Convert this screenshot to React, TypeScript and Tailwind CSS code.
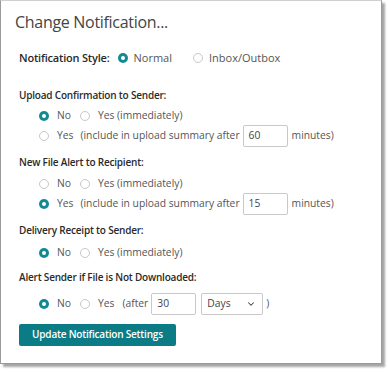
import { ChevronDown } from "lucide-react";

const Radio = ({ checked }: { checked?: boolean }) =>
  checked ? (
    <span className="inline-flex h-[10px] w-[10px] shrink-0 items-center justify-center rounded-full bg-[#138a93]">
      <span className="h-[4px] w-[4px] rounded-full bg-white" />
    </span>
  ) : (
    <span className="inline-block h-[10px] w-[10px] shrink-0 rounded-full border border-[#c8c8c8] bg-white" />
  );

const Option = ({ checked, label, gap = "gap-[8px]" }: { checked?: boolean; label: string; gap?: string }) => (
  <span className={`flex items-center ${gap}`}>
    <Radio checked={checked} />
    <span>{label}</span>
  </span>
);

const NumBox = ({ value }: { value: string }) => (
  <span className="flex h-[22px] w-[45px] items-center rounded-[2px] border border-[#c9c9c9] px-[5px] text-[#444]">
    {value}
  </span>
);

const Heading = ({ children, className = "" }: { children: string; className?: string }) => (
  <div className={`text-[10px] font-semibold tracking-[-0.2px] text-[#2a2a2a] ${className}`}>{children}</div>
);

export default function App() {
  return (
    <div className="h-[372px] w-[388px] bg-white font-['Open_Sans',sans-serif] text-[10.3px]">
      <div className="h-[364px] w-[382px] border border-[#9a9a9a] border-t-[#cfcfcf] bg-white px-[18px] shadow-[3px_3px_2px_rgba(0,0,0,0.35)]">
        <h1 className="-ml-[4px] mt-[9px] text-[16px] tracking-[-0.3px] text-[#444]">Change Notification...</h1>

        {/* notification style */}
        <div className="mt-[16px] flex items-center text-[11px] text-[#555]">
          <span className="font-semibold tracking-[-0.2px] text-[#2a2a2a]">Notification Style:</span>
          <span className="ml-[8px]"><Option checked label="Normal" gap="gap-[6px]" /></span>
          <span className="ml-[21px]"><Option label="Inbox/Outbox" gap="gap-[6px]" /></span>
        </div>

        <Heading className="mt-[21px]">Upload Confirmation to Sender:</Heading>
        <div className="ml-[20px] mt-[6px] flex flex-col gap-[1px] text-[#555]">
          <div className="flex h-[15px] items-center gap-[9px]">
            <Option checked label="No" />
            <Option label="Yes (immediately)" />
          </div>
          <div className="flex items-center">
            <Option label="Yes" />
            <span className="ml-[7px]">(include in upload summary after</span>
            <span className="ml-[3px]"><NumBox value="60" /></span>
            <span className="ml-[4px]">minutes)</span>
          </div>
        </div>

        <Heading className="mt-[8px]">New File Alert to Recipient:</Heading>
        <div className="ml-[20px] mt-[7px] flex flex-col gap-[1px] text-[#555]">
          <div className="flex h-[15px] items-center gap-[9px]">
            <Option label="No" />
            <Option label="Yes (immediately)" />
          </div>
          <div className="flex items-center">
            <Option checked label="Yes" />
            <span className="ml-[7px]">(include in upload summary after</span>
            <span className="ml-[3px]"><NumBox value="15" /></span>
            <span className="ml-[4px]">minutes)</span>
          </div>
        </div>

        <Heading className="mt-[8px]">Delivery Receipt to Sender:</Heading>
        <div className="ml-[20px] mt-[8px] flex h-[15px] items-center gap-[9px] text-[#555]">
          <Option checked label="No" />
          <Option label="Yes (immediately)" />
        </div>

        <Heading className="mt-[9px]">Alert Sender if File is Not Downloaded:</Heading>
        <div className="ml-[20px] mt-[8px] flex items-center text-[#555]">
          <Option checked label="No" />
          <span className="ml-[9px]"><Option label="Yes" /></span>
          <span className="ml-[8px]">(after</span>
          <span className="ml-[3px]"><NumBox value="30" /></span>
          <span className="ml-[5px] flex h-[22px] w-[62px] items-center justify-between rounded-[2px] border border-[#c9c9c9] pl-[5px] pr-[6px] text-[#444]">
            Days
            <ChevronDown className="h-[10px] w-[10px]" strokeWidth={2.5} />
          </span>
          <span className="ml-[3px]">)</span>
        </div>

        <button className="mt-[9px] h-[22px] w-[157px] rounded-[2px] bg-[#0b7c85] text-[10px] font-semibold tracking-[-0.2px] text-white">
          Update Notification Settings
        </button>
      </div>
    </div>
  );
}
